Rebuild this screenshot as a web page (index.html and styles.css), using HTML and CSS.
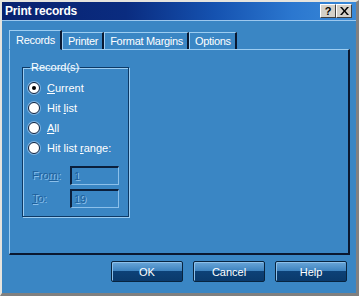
FILE: index.html
```html
<!DOCTYPE html>
<html>
<head>
<meta charset="utf-8">
<link rel="stylesheet" href="styles.css">
</head>
<body>
<div class="window">
  <div class="titlebar">
    <span class="title">Print records</span>
    <div class="tbtns">
      <span class="tbtn">?</span>
      <span class="tbtn x">
        <svg width="9" height="8" viewBox="0 0 9 8"><path d="M0 0h2l2.5 3 2.5-3h2L5.5 4 9 8H7L4.5 5 2 8H0l3.5-4z" fill="#000"/></svg>
      </span>
    </div>
  </div>
  <div class="body">
    <div class="tabs">
      <div class="tab active">Records</div>
      <div class="tab">Printer</div>
      <div class="tab">Format Margins</div>
      <div class="tab">Options</div>
    </div>
    <div class="panel">
      <fieldset class="group">
        <legend>Record(s)</legend>
        <label class="radio"><span class="dot checked"></span><span><u>C</u>urrent</span></label>
        <label class="radio"><span class="dot"></span><span>Hit <u>l</u>ist</span></label>
        <label class="radio"><span class="dot"></span><span><u>A</u>ll</span></label>
        <label class="radio"><span class="dot"></span><span>Hit list <u>r</u>ange:</span></label>
        <div class="field"><span class="flabel">Fro<u>m</u>:</span><span class="input">1</span></div>
        <div class="field"><span class="flabel"><u>T</u>o:</span><span class="input">19</span></div>
      </fieldset>
    </div>
    <div class="buttons">
      <span class="btn">OK</span>
      <span class="btn">Cancel</span>
      <span class="btn">Help</span>
    </div>
  </div>
</div>
</body>
</html>
```
FILE: styles.css
```css
html, body { margin: 0; padding: 0; }
body { width: 359px; height: 296px; overflow: hidden; background: #3a86c4; font-family: "Liberation Sans", Arial, sans-serif; font-size: 11px; color: #fff; }
.window { width: 359px; height: 296px; box-sizing: border-box; border-style: solid; border-width: 2px 3px 3px 2px; border-color: #e6e4de #808080 #808080 #e6e4de; background: #3a86c4; display: flex; flex-direction: column; }
.titlebar { height: 18px; background: linear-gradient(to right, #08216f 0%, #0a2c80 35%, #1552b0 60%, #2b77cf 82%, #3a8ad8 100%); display: flex; align-items: center; justify-content: space-between; padding: 0 4px 0 3px; border-bottom: 1px solid #9cc8ee; }
.title { font-weight: bold; font-size: 12px; color: #fff; letter-spacing: -0.2px; }
.tbtns { display: flex; gap: 0; }
.tbtn { width: 14px; height: 12px; background: #d4d0c8; border-style: solid; border-width: 1px; border-color: #fff #404040 #404040 #fff; color: #000; font-weight: bold; font-size: 11px; line-height: 12px; text-align: center; display: flex; align-items: center; justify-content: center; }
.body { flex: 1; padding: 10px 6px 0 7px; display: flex; flex-direction: column; }
.tabs { display: flex; align-items: flex-end; height: 18px; position: relative; z-index: 1; }
.tab { height: 16px; line-height: 16px; padding: 0 4px 0 5px; letter-spacing: -0.3px; border-style: solid; border-width: 1px 2px 0 1px; border-color: #9ccdf2 #0a1830 transparent #9ccdf2; margin-bottom: 0; }
.tab.active { height: 18px; line-height: 19px; padding: 0 5px 0 6px; border-right-color: #0a1830; margin-bottom: -1px; background: #3a86c4; border-bottom: 1px solid #3a86c4; }
.panel { height: 206px; box-sizing: border-box; border-style: solid; border-width: 1px 2px 2px 1px; border-color: #9ccdf2 #0a1830 #0a1830 #9ccdf2; padding: 12px 0 0 12px; }
.group { margin: 0; width: 107px; height: 155px; box-sizing: border-box; border: 1px solid #0d3a66; box-shadow: 1px 1px 0 #9ccdf2, inset 1px 1px 0 #9ccdf2; padding: 5px 0 0 5px; display: flex; flex-direction: column; }
.group legend { padding: 0 1px; margin-left: 2px; line-height: 11px; color: #fff; }
.radio { display: flex; align-items: center; height: 20px; gap: 7px; }
.dot { width: 10px; height: 10px; border-radius: 50%; background: #fff; border: 1px solid #0a2040; box-shadow: 0 0 0 1px #7fb2de; position: relative; }
.dot.checked::after { content: ""; position: absolute; left: 3px; top: 3px; width: 4px; height: 4px; border-radius: 50%; background: #000; }
.field { display: flex; align-items: center; margin-top: 3px; height: 20px; }
.field:first-of-type { margin-top: 7px; }
.flabel { width: 38px; padding-left: 4px; color: #1d5f9a; text-shadow: 1px 1px 0 #8cc0ea; }
.input { width: 44px; height: 16px; box-sizing: content-box; border-style: solid; border-width: 2px 1px 1px 2px; border-color: #0a1f3c #8cc0ea #8cc0ea #0a1f3c; color: #1d5f9a; text-shadow: 1px 1px 0 #8cc0ea; line-height: 16px; padding-left: 2px; }
.buttons { display: flex; justify-content: flex-end; gap: 10px; margin-top: 6px; padding-right: 3px; }
.btn { width: 70px; height: 19px; box-sizing: content-box; border: 1px solid #08243f; border-radius: 2px; background: linear-gradient(to bottom, #6aa6d8 0%, #3f84c0 45%, #0d4177 50%, #0a3a6c 100%); box-shadow: inset 1px 1px 0 #8cc0ea; color: #fff; text-align: center; line-height: 20px; font-size: 11px; }
```
